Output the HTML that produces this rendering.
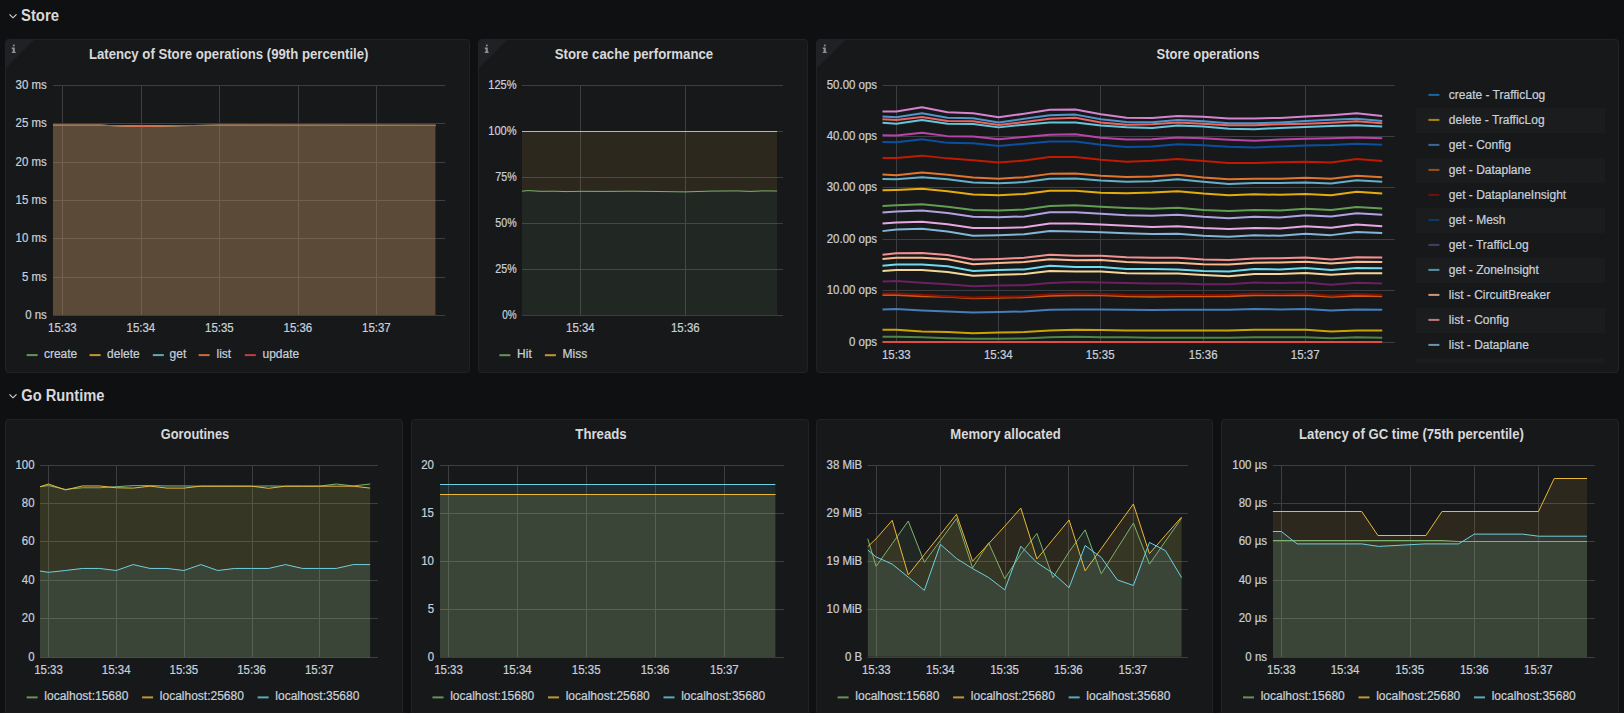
<!DOCTYPE html><html><head><meta charset="utf-8"><style>html,body{margin:0;padding:0;background:#0f1012;overflow:hidden;width:1624px;height:713px}svg{display:block}</style></head><body><svg width="1624" height="713" viewBox="0 0 1624 713" font-family='"Liberation Sans", sans-serif'>
<rect width="1624" height="713" fill="#0f1012"/>
<path d="M9.50,14.30 L13.00,17.80 L16.50,14.30" fill="none" stroke="#d8d9da" stroke-width="1.15"/>
<text x="21.00" y="21.00" font-size="16" fill="#d8d9da" text-anchor="start" font-weight="bold" textLength="38" lengthAdjust="spacingAndGlyphs">Store</text>
<path d="M9.50,394.30 L13.00,397.80 L16.50,394.30" fill="none" stroke="#d8d9da" stroke-width="1.15"/>
<text x="21.30" y="401.40" font-size="16" fill="#d8d9da" text-anchor="start" font-weight="bold" textLength="83.2" lengthAdjust="spacingAndGlyphs">Go Runtime</text>
<rect x="5.50" y="39.50" width="464.00" height="333.00" rx="3" fill="#17181a" stroke="#212225" stroke-width="1"/>
<path d="M6.00,42.00 Q6.00,40.00 8.00,40.00 L34.00,40.00 L6.00,68.00 Z" fill="#202124"/>
<g fill="#8e9094"><rect x="12.80" y="44.60" width="2" height="1.8" rx="0.8"/><path d="M11.80,47.60 h3 v4.2 h0.9 v1.3 h-3.9 v-1.3 h0.9 v-2.9 h-0.9 z"/></g>
<text x="88.90" y="58.90" font-size="14" fill="#d8d9da" text-anchor="start" font-weight="bold" textLength="279.6" lengthAdjust="spacingAndGlyphs">Latency of Store operations (99th percentile)</text>
<line x1="53.00" y1="85.50" x2="445.00" y2="85.50" stroke="#3d3e41" stroke-width="1"/>
<line x1="53.00" y1="123.50" x2="445.00" y2="123.50" stroke="#3d3e41" stroke-width="1"/>
<line x1="53.00" y1="162.50" x2="445.00" y2="162.50" stroke="#3d3e41" stroke-width="1"/>
<line x1="53.00" y1="200.50" x2="445.00" y2="200.50" stroke="#3d3e41" stroke-width="1"/>
<line x1="53.00" y1="238.50" x2="445.00" y2="238.50" stroke="#3d3e41" stroke-width="1"/>
<line x1="53.00" y1="277.50" x2="445.00" y2="277.50" stroke="#3d3e41" stroke-width="1"/>
<line x1="53.00" y1="315.50" x2="445.00" y2="315.50" stroke="#3d3e41" stroke-width="1"/>
<line x1="62.50" y1="85.50" x2="62.50" y2="315.50" stroke="#3d3e41" stroke-width="1"/>
<line x1="141.50" y1="85.50" x2="141.50" y2="315.50" stroke="#3d3e41" stroke-width="1"/>
<line x1="219.50" y1="85.50" x2="219.50" y2="315.50" stroke="#3d3e41" stroke-width="1"/>
<line x1="298.50" y1="85.50" x2="298.50" y2="315.50" stroke="#3d3e41" stroke-width="1"/>
<line x1="376.50" y1="85.50" x2="376.50" y2="315.50" stroke="#3d3e41" stroke-width="1"/>
<text x="46.80" y="89.00" font-size="12" fill="#c7d0d9" text-anchor="end" font-weight="normal" textLength="31.21" lengthAdjust="spacingAndGlyphs" stroke="#c7d0d9" stroke-width="0.22">30 ms</text>
<text x="46.80" y="127.33" font-size="12" fill="#c7d0d9" text-anchor="end" font-weight="normal" textLength="31.21" lengthAdjust="spacingAndGlyphs" stroke="#c7d0d9" stroke-width="0.22">25 ms</text>
<text x="46.80" y="165.67" font-size="12" fill="#c7d0d9" text-anchor="end" font-weight="normal" textLength="31.21" lengthAdjust="spacingAndGlyphs" stroke="#c7d0d9" stroke-width="0.22">20 ms</text>
<text x="46.80" y="204.00" font-size="12" fill="#c7d0d9" text-anchor="end" font-weight="normal" textLength="31.21" lengthAdjust="spacingAndGlyphs" stroke="#c7d0d9" stroke-width="0.22">15 ms</text>
<text x="46.80" y="242.33" font-size="12" fill="#c7d0d9" text-anchor="end" font-weight="normal" textLength="31.21" lengthAdjust="spacingAndGlyphs" stroke="#c7d0d9" stroke-width="0.22">10 ms</text>
<text x="46.80" y="280.66" font-size="12" fill="#c7d0d9" text-anchor="end" font-weight="normal" textLength="24.83" lengthAdjust="spacingAndGlyphs" stroke="#c7d0d9" stroke-width="0.22">5 ms</text>
<text x="46.80" y="319.00" font-size="12" fill="#c7d0d9" text-anchor="end" font-weight="normal" textLength="21.66" lengthAdjust="spacingAndGlyphs" stroke="#c7d0d9" stroke-width="0.22">0 ns</text>
<text x="62.40" y="332.10" font-size="12" fill="#c7d0d9" text-anchor="middle" font-weight="normal" textLength="28.68" lengthAdjust="spacingAndGlyphs" stroke="#c7d0d9" stroke-width="0.22">15:33</text>
<text x="140.90" y="332.10" font-size="12" fill="#c7d0d9" text-anchor="middle" font-weight="normal" textLength="28.68" lengthAdjust="spacingAndGlyphs" stroke="#c7d0d9" stroke-width="0.22">15:34</text>
<text x="219.40" y="332.10" font-size="12" fill="#c7d0d9" text-anchor="middle" font-weight="normal" textLength="28.68" lengthAdjust="spacingAndGlyphs" stroke="#c7d0d9" stroke-width="0.22">15:35</text>
<text x="297.90" y="332.10" font-size="12" fill="#c7d0d9" text-anchor="middle" font-weight="normal" textLength="28.68" lengthAdjust="spacingAndGlyphs" stroke="#c7d0d9" stroke-width="0.22">15:36</text>
<text x="376.40" y="332.10" font-size="12" fill="#c7d0d9" text-anchor="middle" font-weight="normal" textLength="28.68" lengthAdjust="spacingAndGlyphs" stroke="#c7d0d9" stroke-width="0.22">15:37</text>
<polygon points="53.00,315.00 53.00,125.30 100.00,125.30 141.00,126.20 180.00,125.60 220.00,125.30 435.40,125.40 435.40,315.00" fill="#7EB26D" fill-opacity="0.1"/>
<polygon points="53.00,315.00 53.00,125.30 100.00,125.30 141.00,126.20 180.00,125.60 220.00,125.30 435.40,125.40 435.40,315.00" fill="#EAB839" fill-opacity="0.1"/>
<polygon points="53.00,315.00 53.00,125.30 100.00,125.30 141.00,126.20 180.00,125.60 220.00,125.30 435.40,125.40 435.40,315.00" fill="#6ED0E0" fill-opacity="0.1"/>
<polygon points="53.00,315.00 53.00,125.30 100.00,125.30 141.00,126.20 180.00,125.60 220.00,125.30 435.40,125.40 435.40,315.00" fill="#EF843C" fill-opacity="0.1"/>
<polygon points="53.00,315.00 53.00,125.30 100.00,125.30 141.00,126.20 180.00,125.60 220.00,125.30 435.40,125.40 435.40,315.00" fill="#E24D42" fill-opacity="0.1"/>
<polyline points="53.00,125.30 100.00,125.30 141.00,126.20 180.00,125.60 220.00,125.30 435.40,125.40" fill="none" stroke="#7EB26D" stroke-width="1" stroke-linejoin="round"/><polyline points="53.00,125.30 100.00,125.30 141.00,126.20 180.00,125.60 220.00,125.30 435.40,125.40" fill="none" stroke="#EAB839" stroke-width="1" stroke-linejoin="round"/><polyline points="53.00,125.30 100.00,125.30 141.00,126.20 180.00,125.60 220.00,125.30 435.40,125.40" fill="none" stroke="#6ED0E0" stroke-width="1" stroke-linejoin="round"/><polyline points="53.00,125.30 100.00,125.30 141.00,126.20 180.00,125.60 220.00,125.30 435.40,125.40" fill="none" stroke="#EF843C" stroke-width="1" stroke-linejoin="round"/><polyline points="53.00,125.30 100.00,125.30 141.00,126.20 180.00,125.60 220.00,125.30 435.40,125.40" fill="none" stroke="#E24D42" stroke-width="1" stroke-linejoin="round"/>
<rect x="26.60" y="354.10" width="11" height="2" fill="#7EB26D" fill-opacity="0.8"/>
<text x="43.90" y="357.70" font-size="12" fill="#c7d0d9" text-anchor="start" font-weight="normal" stroke="#c7d0d9" stroke-width="0.22">create</text>
<rect x="89.60" y="354.10" width="11" height="2" fill="#EAB839" fill-opacity="0.8"/>
<text x="107.10" y="357.70" font-size="12" fill="#c7d0d9" text-anchor="start" font-weight="normal" stroke="#c7d0d9" stroke-width="0.22">delete</text>
<rect x="152.80" y="354.10" width="11" height="2" fill="#6ED0E0" fill-opacity="0.8"/>
<text x="169.60" y="357.70" font-size="12" fill="#c7d0d9" text-anchor="start" font-weight="normal" stroke="#c7d0d9" stroke-width="0.22">get</text>
<rect x="198.60" y="354.10" width="11" height="2" fill="#EF843C" fill-opacity="0.8"/>
<text x="216.50" y="357.70" font-size="12" fill="#c7d0d9" text-anchor="start" font-weight="normal" stroke="#c7d0d9" stroke-width="0.22">list</text>
<rect x="244.80" y="354.10" width="11" height="2" fill="#E24D42" fill-opacity="0.8"/>
<text x="262.50" y="357.70" font-size="12" fill="#c7d0d9" text-anchor="start" font-weight="normal" stroke="#c7d0d9" stroke-width="0.22">update</text>
<rect x="478.50" y="39.50" width="329.00" height="333.00" rx="3" fill="#17181a" stroke="#212225" stroke-width="1"/>
<path d="M479.00,42.00 Q479.00,40.00 481.00,40.00 L507.00,40.00 L479.00,68.00 Z" fill="#202124"/>
<g fill="#8e9094"><rect x="485.80" y="44.60" width="2" height="1.8" rx="0.8"/><path d="M484.80,47.60 h3 v4.2 h0.9 v1.3 h-3.9 v-1.3 h0.9 v-2.9 h-0.9 z"/></g>
<text x="554.70" y="58.90" font-size="14" fill="#d8d9da" text-anchor="start" font-weight="bold" textLength="158.5" lengthAdjust="spacingAndGlyphs">Store cache performance</text>
<line x1="522.00" y1="85.50" x2="783.00" y2="85.50" stroke="#3d3e41" stroke-width="1"/>
<line x1="522.00" y1="131.50" x2="783.00" y2="131.50" stroke="#3d3e41" stroke-width="1"/>
<line x1="522.00" y1="177.50" x2="783.00" y2="177.50" stroke="#3d3e41" stroke-width="1"/>
<line x1="522.00" y1="223.50" x2="783.00" y2="223.50" stroke="#3d3e41" stroke-width="1"/>
<line x1="522.00" y1="269.50" x2="783.00" y2="269.50" stroke="#3d3e41" stroke-width="1"/>
<line x1="522.00" y1="315.50" x2="783.00" y2="315.50" stroke="#3d3e41" stroke-width="1"/>
<line x1="580.50" y1="85.50" x2="580.50" y2="315.50" stroke="#3d3e41" stroke-width="1"/>
<line x1="685.50" y1="85.50" x2="685.50" y2="315.50" stroke="#3d3e41" stroke-width="1"/>
<text x="516.60" y="89.30" font-size="12" fill="#c7d0d9" text-anchor="end" font-weight="normal" textLength="28.3" lengthAdjust="spacingAndGlyphs" stroke="#c7d0d9" stroke-width="0.22">125%</text>
<text x="516.60" y="135.24" font-size="12" fill="#c7d0d9" text-anchor="end" font-weight="normal" textLength="28.3" lengthAdjust="spacingAndGlyphs" stroke="#c7d0d9" stroke-width="0.22">100%</text>
<text x="516.60" y="181.18" font-size="12" fill="#c7d0d9" text-anchor="end" font-weight="normal" textLength="21.3" lengthAdjust="spacingAndGlyphs" stroke="#c7d0d9" stroke-width="0.22">75%</text>
<text x="516.60" y="227.12" font-size="12" fill="#c7d0d9" text-anchor="end" font-weight="normal" textLength="21.3" lengthAdjust="spacingAndGlyphs" stroke="#c7d0d9" stroke-width="0.22">50%</text>
<text x="516.60" y="273.06" font-size="12" fill="#c7d0d9" text-anchor="end" font-weight="normal" textLength="21.3" lengthAdjust="spacingAndGlyphs" stroke="#c7d0d9" stroke-width="0.22">25%</text>
<text x="516.60" y="319.00" font-size="12" fill="#c7d0d9" text-anchor="end" font-weight="normal" textLength="14.4" lengthAdjust="spacingAndGlyphs" stroke="#c7d0d9" stroke-width="0.22">0%</text>
<text x="580.40" y="331.90" font-size="12" fill="#c7d0d9" text-anchor="middle" font-weight="normal" textLength="28.68" lengthAdjust="spacingAndGlyphs" stroke="#c7d0d9" stroke-width="0.22">15:34</text>
<text x="685.30" y="331.90" font-size="12" fill="#c7d0d9" text-anchor="middle" font-weight="normal" textLength="28.68" lengthAdjust="spacingAndGlyphs" stroke="#c7d0d9" stroke-width="0.22">15:36</text>
<polygon points="522.00,315.00 522.00,191.20 528.00,190.60 541.00,191.30 554.00,191.20 567.00,191.60 580.00,191.30 606.00,191.40 632.00,191.20 658.00,191.50 685.00,191.90 711.00,191.10 737.00,190.90 750.00,191.40 763.00,190.90 777.10,191.00 777.10,315.00" fill="#7EB26D" fill-opacity="0.1"/>
<polygon points="522,131.5 777.1,131.5 777.10,191.00 763.00,190.90 750.00,191.40 737.00,190.90 711.00,191.10 685.00,191.90 658.00,191.50 632.00,191.20 606.00,191.40 580.00,191.30 567.00,191.60 554.00,191.20 541.00,191.30 528.00,190.60 522.00,191.20" fill="#EAB839" fill-opacity="0.1"/>
<polyline points="522.00,191.20 528.00,190.60 541.00,191.30 554.00,191.20 567.00,191.60 580.00,191.30 606.00,191.40 632.00,191.20 658.00,191.50 685.00,191.90 711.00,191.10 737.00,190.90 750.00,191.40 763.00,190.90 777.10,191.00" fill="none" stroke="#7EB26D" stroke-width="1" stroke-linejoin="round"/><polyline points="522.00,131.50 777.10,131.50" fill="none" stroke="#EAB839" stroke-width="1" stroke-linejoin="round"/>
<rect x="499.40" y="354.20" width="11" height="2" fill="#7EB26D" fill-opacity="0.8"/>
<text x="517.10" y="357.80" font-size="12" fill="#c7d0d9" text-anchor="start" font-weight="normal" stroke="#c7d0d9" stroke-width="0.22">Hit</text>
<rect x="544.90" y="354.20" width="11" height="2" fill="#EAB839" fill-opacity="0.8"/>
<text x="562.60" y="357.80" font-size="12" fill="#c7d0d9" text-anchor="start" font-weight="normal" stroke="#c7d0d9" stroke-width="0.22">Miss</text>
<rect x="816.50" y="39.50" width="802.00" height="333.00" rx="3" fill="#17181a" stroke="#212225" stroke-width="1"/>
<path d="M817.00,42.00 Q817.00,40.00 819.00,40.00 L845.00,40.00 L817.00,68.00 Z" fill="#202124"/>
<g fill="#8e9094"><rect x="823.80" y="44.60" width="2" height="1.8" rx="0.8"/><path d="M822.80,47.60 h3 v4.2 h0.9 v1.3 h-3.9 v-1.3 h0.9 v-2.9 h-0.9 z"/></g>
<text x="1156.60" y="58.90" font-size="14" fill="#d8d9da" text-anchor="start" font-weight="bold" textLength="102.73" lengthAdjust="spacingAndGlyphs">Store operations</text>
<line x1="882.50" y1="85.50" x2="1394.60" y2="85.50" stroke="#3d3e41" stroke-width="1"/>
<line x1="882.50" y1="136.50" x2="1394.60" y2="136.50" stroke="#3d3e41" stroke-width="1"/>
<line x1="882.50" y1="187.50" x2="1394.60" y2="187.50" stroke="#3d3e41" stroke-width="1"/>
<line x1="882.50" y1="239.50" x2="1394.60" y2="239.50" stroke="#3d3e41" stroke-width="1"/>
<line x1="882.50" y1="290.50" x2="1394.60" y2="290.50" stroke="#3d3e41" stroke-width="1"/>
<line x1="882.50" y1="342.50" x2="1394.60" y2="342.50" stroke="#3d3e41" stroke-width="1"/>
<line x1="896.50" y1="85.50" x2="896.50" y2="342.50" stroke="#3d3e41" stroke-width="1"/>
<line x1="998.50" y1="85.50" x2="998.50" y2="342.50" stroke="#3d3e41" stroke-width="1"/>
<line x1="1100.50" y1="85.50" x2="1100.50" y2="342.50" stroke="#3d3e41" stroke-width="1"/>
<line x1="1203.50" y1="85.50" x2="1203.50" y2="342.50" stroke="#3d3e41" stroke-width="1"/>
<line x1="1305.50" y1="85.50" x2="1305.50" y2="342.50" stroke="#3d3e41" stroke-width="1"/>
<text x="877.10" y="89.20" font-size="12" fill="#c7d0d9" text-anchor="end" font-weight="normal" textLength="50.34" lengthAdjust="spacingAndGlyphs" stroke="#c7d0d9" stroke-width="0.22">50.00 ops</text>
<text x="877.10" y="140.10" font-size="12" fill="#c7d0d9" text-anchor="end" font-weight="normal" textLength="50.34" lengthAdjust="spacingAndGlyphs" stroke="#c7d0d9" stroke-width="0.22">40.00 ops</text>
<text x="877.10" y="191.20" font-size="12" fill="#c7d0d9" text-anchor="end" font-weight="normal" textLength="50.34" lengthAdjust="spacingAndGlyphs" stroke="#c7d0d9" stroke-width="0.22">30.00 ops</text>
<text x="877.10" y="243.10" font-size="12" fill="#c7d0d9" text-anchor="end" font-weight="normal" textLength="50.34" lengthAdjust="spacingAndGlyphs" stroke="#c7d0d9" stroke-width="0.22">20.00 ops</text>
<text x="877.10" y="294.10" font-size="12" fill="#c7d0d9" text-anchor="end" font-weight="normal" textLength="50.34" lengthAdjust="spacingAndGlyphs" stroke="#c7d0d9" stroke-width="0.22">10.00 ops</text>
<text x="877.10" y="345.60" font-size="12" fill="#c7d0d9" text-anchor="end" font-weight="normal" textLength="28.03" lengthAdjust="spacingAndGlyphs" stroke="#c7d0d9" stroke-width="0.22">0 ops</text>
<text x="896.30" y="359.00" font-size="12" fill="#c7d0d9" text-anchor="middle" font-weight="normal" textLength="28.68" lengthAdjust="spacingAndGlyphs" stroke="#c7d0d9" stroke-width="0.22">15:33</text>
<text x="998.30" y="359.00" font-size="12" fill="#c7d0d9" text-anchor="middle" font-weight="normal" textLength="28.68" lengthAdjust="spacingAndGlyphs" stroke="#c7d0d9" stroke-width="0.22">15:34</text>
<text x="1100.20" y="359.00" font-size="12" fill="#c7d0d9" text-anchor="middle" font-weight="normal" textLength="28.68" lengthAdjust="spacingAndGlyphs" stroke="#c7d0d9" stroke-width="0.22">15:35</text>
<text x="1203.20" y="359.00" font-size="12" fill="#c7d0d9" text-anchor="middle" font-weight="normal" textLength="28.68" lengthAdjust="spacingAndGlyphs" stroke="#c7d0d9" stroke-width="0.22">15:36</text>
<text x="1305.20" y="359.00" font-size="12" fill="#c7d0d9" text-anchor="middle" font-weight="normal" textLength="28.68" lengthAdjust="spacingAndGlyphs" stroke="#c7d0d9" stroke-width="0.22">15:37</text>
<polyline points="882.50,341.99 896.40,341.99 921.97,341.99 947.54,341.99 973.11,341.99 998.68,341.99 1024.25,341.99 1049.82,341.99 1075.39,341.99 1100.96,341.99 1126.53,341.99 1152.10,341.99 1177.67,341.99 1203.24,341.99 1228.81,341.99 1254.38,341.99 1279.95,341.99 1305.52,341.99 1331.09,341.99 1356.66,341.99 1382.23,341.99" fill="none" stroke="#E24D42" stroke-width="2" stroke-linejoin="round"/><polyline points="882.50,336.73 896.40,336.73 921.97,337.36 947.54,338.20 973.11,338.83 998.68,338.83 1024.25,338.41 1049.82,337.36 1075.39,336.73 1100.96,337.15 1126.53,337.36 1152.10,337.78 1177.67,337.78 1203.24,337.78 1228.81,337.78 1254.38,337.36 1279.95,337.36 1305.52,337.15 1331.09,338.20 1356.66,337.36 1382.23,337.78" fill="none" stroke="#508642" stroke-width="2" stroke-linejoin="round"/><polyline points="882.50,329.79 896.40,329.79 921.97,331.47 947.54,331.89 973.11,333.15 998.68,332.52 1024.25,332.10 1049.82,330.42 1075.39,329.79 1100.96,330.00 1126.53,330.42 1152.10,330.42 1177.67,330.42 1203.24,330.42 1228.81,330.42 1254.38,329.79 1279.95,329.79 1305.52,329.79 1331.09,331.47 1356.66,330.42 1382.23,330.42" fill="none" stroke="#CCA300" stroke-width="2" stroke-linejoin="round"/><polyline points="882.50,309.38 896.40,308.96 921.97,310.43 947.54,311.49 973.11,312.54 998.68,311.91 1024.25,311.49 1049.82,309.80 1075.39,309.38 1100.96,309.38 1126.53,309.80 1152.10,310.01 1177.67,309.80 1203.24,309.80 1228.81,309.80 1254.38,308.96 1279.95,309.38 1305.52,308.96 1331.09,310.43 1356.66,309.38 1382.23,309.80" fill="none" stroke="#447EBC" stroke-width="2" stroke-linejoin="round"/><polyline points="882.50,295.08 896.40,295.08 921.97,296.34 947.54,296.76 973.11,298.23 998.68,297.81 1024.25,297.18 1049.82,295.71 1075.39,295.29 1100.96,295.29 1126.53,296.34 1152.10,296.76 1177.67,296.34 1203.24,296.34 1228.81,296.34 1254.38,295.29 1279.95,295.29 1305.52,295.08 1331.09,296.76 1356.66,295.71 1382.23,296.34" fill="none" stroke="#C15C17" stroke-width="2" stroke-linejoin="round"/><polyline points="882.50,293.61 896.40,293.61 921.97,294.66 947.54,296.13 973.11,297.39 998.68,296.76 1024.25,296.34 1049.82,294.24 1075.39,293.61 1100.96,294.03 1126.53,295.08 1152.10,295.29 1177.67,295.08 1203.24,295.08 1228.81,294.66 1254.38,293.61 1279.95,294.03 1305.52,293.61 1331.09,295.71 1356.66,294.03 1382.23,295.08" fill="none" stroke="#890F02" stroke-width="2" stroke-linejoin="round"/><polyline points="882.50,281.41 896.40,280.98 921.97,282.67 947.54,284.14 973.11,286.24 998.68,285.61 1024.25,285.19 1049.82,283.09 1075.39,282.04 1100.96,282.46 1126.53,283.09 1152.10,283.51 1177.67,283.51 1203.24,284.14 1228.81,284.14 1254.38,282.46 1279.95,283.09 1305.52,282.46 1331.09,284.77 1356.66,282.67 1382.23,283.51" fill="none" stroke="#6D1F62" stroke-width="2" stroke-linejoin="round"/><polyline points="882.50,270.89 896.40,270.05 921.97,270.05 947.54,271.94 973.11,275.73 998.68,274.67 1024.25,274.04 1049.82,271.10 1075.39,271.52 1100.96,271.52 1126.53,273.20 1152.10,273.62 1177.67,273.62 1203.24,275.09 1228.81,276.36 1254.38,274.04 1279.95,274.04 1305.52,272.99 1331.09,274.67 1356.66,273.20 1382.23,273.20" fill="none" stroke="#F4D598" stroke-width="2" stroke-linejoin="round"/><polyline points="882.50,265.63 896.40,264.58 921.97,264.58 947.54,266.26 973.11,271.10 998.68,270.05 1024.25,269.42 1049.82,265.84 1075.39,266.89 1100.96,266.89 1126.53,268.99 1152.10,268.99 1177.67,269.42 1203.24,270.89 1228.81,271.52 1254.38,268.99 1279.95,269.42 1305.52,267.94 1331.09,270.05 1356.66,267.94 1382.23,268.36" fill="none" stroke="#70DBED" stroke-width="2" stroke-linejoin="round"/><polyline points="882.50,258.90 896.40,257.85 921.97,257.85 947.54,259.32 973.11,264.16 998.68,263.10 1024.25,262.05 1049.82,259.32 1075.39,260.37 1100.96,259.95 1126.53,262.05 1152.10,262.68 1177.67,262.68 1203.24,264.16 1228.81,264.58 1254.38,262.68 1279.95,262.47 1305.52,261.63 1331.09,263.53 1356.66,261.63 1382.23,262.05" fill="none" stroke="#F9BA8F" stroke-width="2" stroke-linejoin="round"/><polyline points="882.50,254.69 896.40,253.22 921.97,253.01 947.54,255.11 973.11,259.53 998.68,258.90 1024.25,257.85 1049.82,254.69 1075.39,255.74 1100.96,255.74 1126.53,257.21 1152.10,257.85 1177.67,257.85 1203.24,259.53 1228.81,259.95 1254.38,258.48 1279.95,258.27 1305.52,257.43 1331.09,259.53 1356.66,257.21 1382.23,257.43" fill="none" stroke="#F29191" stroke-width="2" stroke-linejoin="round"/><polyline points="882.50,231.13 896.40,229.45 921.97,228.82 947.54,231.55 973.11,235.76 998.68,235.13 1024.25,234.29 1049.82,230.92 1075.39,231.55 1100.96,232.18 1126.53,233.24 1152.10,234.08 1177.67,233.66 1203.24,235.76 1228.81,236.81 1254.38,235.34 1279.95,235.76 1305.52,233.66 1331.09,235.13 1356.66,231.97 1382.23,233.02" fill="none" stroke="#82B5D8" stroke-width="2" stroke-linejoin="round"/><polyline points="882.50,223.56 896.40,222.51 921.97,221.67 947.54,224.19 973.11,227.98 998.68,227.98 1024.25,227.35 1049.82,223.56 1075.39,223.56 1100.96,224.61 1126.53,225.87 1152.10,226.92 1177.67,226.29 1203.24,227.98 1228.81,229.03 1254.38,227.98 1279.95,228.40 1305.52,226.29 1331.09,227.77 1356.66,224.61 1382.23,226.29" fill="none" stroke="#E5A8E2" stroke-width="2" stroke-linejoin="round"/><polyline points="882.50,212.62 896.40,211.57 921.97,210.52 947.54,213.04 973.11,216.83 998.68,217.25 1024.25,216.41 1049.82,212.20 1075.39,212.20 1100.96,213.67 1126.53,215.15 1152.10,215.78 1177.67,214.72 1203.24,216.83 1228.81,218.30 1254.38,216.83 1279.95,217.46 1305.52,215.15 1331.09,216.41 1356.66,213.25 1382.23,214.72" fill="none" stroke="#AEA2E0" stroke-width="2" stroke-linejoin="round"/><polyline points="882.50,205.89 896.40,205.26 921.97,204.21 947.54,206.73 973.11,210.10 998.68,210.52 1024.25,209.47 1049.82,205.89 1075.39,205.26 1100.96,206.73 1126.53,207.99 1152.10,208.83 1177.67,207.78 1203.24,209.89 1228.81,210.94 1254.38,209.89 1279.95,210.52 1305.52,208.83 1331.09,209.89 1356.66,206.94 1382.23,208.41" fill="none" stroke="#629E51" stroke-width="2" stroke-linejoin="round"/><polyline points="882.50,190.27 896.40,189.91 921.97,188.81 947.54,191.19 973.11,194.47 998.68,195.20 1024.25,193.92 1049.82,190.82 1075.39,190.82 1100.96,192.64 1126.53,193.37 1152.10,192.62 1177.67,191.17 1203.24,193.54 1228.81,195.18 1254.38,194.27 1279.95,194.81 1305.52,193.90 1331.09,195.36 1356.66,191.71 1382.23,193.54" fill="none" stroke="#E5AC0E" stroke-width="2" stroke-linejoin="round"/><polyline points="882.50,178.97 896.40,179.33 921.97,177.15 947.54,179.33 973.11,182.43 998.68,183.35 1024.25,182.07 1049.82,178.79 1075.39,178.42 1100.96,180.61 1126.53,181.70 1152.10,181.14 1177.67,179.32 1203.24,181.69 1228.81,183.88 1254.38,182.96 1279.95,182.96 1305.52,182.42 1331.09,183.51 1356.66,180.23 1382.23,181.69" fill="none" stroke="#64B0C8" stroke-width="2" stroke-linejoin="round"/><polyline points="882.50,174.41 896.40,175.14 921.97,172.41 947.54,174.78 973.11,177.51 998.68,178.79 1024.25,177.15 1049.82,173.87 1075.39,173.50 1100.96,175.69 1126.53,176.96 1152.10,176.58 1177.67,174.76 1203.24,177.50 1228.81,179.32 1254.38,178.77 1279.95,178.77 1305.52,177.86 1331.09,178.77 1356.66,175.67 1382.23,177.13" fill="none" stroke="#E0752D" stroke-width="2" stroke-linejoin="round"/><polyline points="882.50,158.00 896.40,158.00 921.97,155.63 947.54,158.37 973.11,160.19 998.68,162.38 1024.25,160.56 1049.82,157.09 1075.39,157.09 1100.96,159.83 1126.53,161.65 1152.10,160.73 1177.67,158.90 1203.24,161.09 1228.81,162.91 1254.38,162.91 1279.95,162.37 1305.52,161.64 1331.09,162.55 1356.66,158.90 1382.23,161.09" fill="none" stroke="#BF1B00" stroke-width="2" stroke-linejoin="round"/><polyline points="882.50,141.96 896.40,142.32 921.97,139.23 947.54,142.87 973.11,143.24 998.68,145.97 1024.25,143.78 1049.82,141.60 1075.39,141.41 1100.96,144.69 1126.53,146.88 1152.10,146.51 1177.67,144.32 1203.24,145.23 1228.81,146.87 1254.38,147.42 1279.95,146.51 1305.52,145.60 1331.09,145.05 1356.66,143.77 1382.23,144.68" fill="none" stroke="#0A50A1" stroke-width="2" stroke-linejoin="round"/><polyline points="882.50,135.21 896.40,135.58 921.97,132.84 947.54,136.13 973.11,136.49 998.68,139.23 1024.25,137.04 1049.82,134.67 1075.39,134.30 1100.96,137.77 1126.53,139.59 1152.10,139.22 1177.67,137.39 1203.24,138.30 1228.81,139.76 1254.38,140.67 1279.95,139.58 1305.52,138.67 1331.09,138.30 1356.66,137.39 1382.23,138.30" fill="none" stroke="#BA43A9" stroke-width="2" stroke-linejoin="round"/><polyline points="882.50,122.82 896.40,123.73 921.97,120.08 947.54,123.73 973.11,124.09 998.68,127.37 1024.25,124.64 1049.82,122.45 1075.39,122.45 1100.96,125.55 1126.53,127.37 1152.10,127.91 1177.67,125.55 1203.24,126.46 1228.81,128.64 1254.38,129.19 1279.95,127.91 1305.52,127.00 1331.09,126.09 1356.66,125.18 1382.23,126.46" fill="none" stroke="#65C5DB" stroke-width="2" stroke-linejoin="round"/><polyline points="882.50,119.17 896.40,120.08 921.97,116.98 947.54,120.99 973.11,121.36 998.68,125.00 1024.25,121.91 1049.82,118.81 1075.39,117.71 1100.96,122.45 1126.53,124.64 1152.10,124.27 1177.67,122.45 1203.24,123.72 1228.81,125.18 1254.38,125.18 1279.95,124.27 1305.52,123.72 1331.09,122.81 1356.66,121.35 1382.23,123.36" fill="none" stroke="#EA6460" stroke-width="2" stroke-linejoin="round"/><polyline points="882.50,116.44 896.40,117.35 921.97,113.15 947.54,117.71 973.11,118.26 998.68,122.45 1024.25,118.81 1049.82,115.16 1075.39,114.61 1100.96,119.17 1126.53,121.91 1152.10,122.26 1177.67,120.08 1203.24,121.35 1228.81,123.18 1254.38,123.36 1279.95,122.45 1305.52,120.99 1331.09,119.71 1356.66,118.80 1382.23,120.99" fill="none" stroke="#5195CE" stroke-width="2" stroke-linejoin="round"/><polyline points="882.50,111.51 896.40,111.51 921.97,107.32 947.54,112.24 973.11,113.15 998.68,117.35 1024.25,113.70 1049.82,109.69 1075.39,109.51 1100.96,114.25 1126.53,117.71 1152.10,117.89 1177.67,115.88 1203.24,116.80 1228.81,118.44 1254.38,118.44 1279.95,117.89 1305.52,116.43 1331.09,115.15 1356.66,113.33 1382.23,115.88" fill="none" stroke="#D683CE" stroke-width="2" stroke-linejoin="round"/>
<rect x="1415.7" y="108.00" width="189.4" height="25.00" fill="#1b1c1e"/>
<rect x="1415.7" y="158.00" width="189.4" height="25.00" fill="#1b1c1e"/>
<rect x="1415.7" y="208.00" width="189.4" height="25.00" fill="#1b1c1e"/>
<rect x="1415.7" y="258.00" width="189.4" height="25.00" fill="#1b1c1e"/>
<rect x="1415.7" y="308.00" width="189.4" height="25.00" fill="#1b1c1e"/>
<rect x="1415.7" y="358.00" width="189.4" height="5.60" fill="#1b1c1e"/>
<rect x="1428.4" y="93.90" width="11" height="2" fill="#1F78C1" fill-opacity="0.8"/>
<text x="1448.80" y="99.20" font-size="12" fill="#c7d0d9" text-anchor="start" font-weight="normal" stroke="#c7d0d9" stroke-width="0.22">create - TrafficLog</text>
<rect x="1428.4" y="118.90" width="11" height="2" fill="#CCA300" fill-opacity="0.8"/>
<text x="1448.80" y="124.20" font-size="12" fill="#c7d0d9" text-anchor="start" font-weight="normal" stroke="#c7d0d9" stroke-width="0.22">delete - TrafficLog</text>
<rect x="1428.4" y="143.90" width="11" height="2" fill="#447EBC" fill-opacity="0.8"/>
<text x="1448.80" y="149.20" font-size="12" fill="#c7d0d9" text-anchor="start" font-weight="normal" stroke="#c7d0d9" stroke-width="0.22">get - Config</text>
<rect x="1428.4" y="168.90" width="11" height="2" fill="#C15C17" fill-opacity="0.8"/>
<text x="1448.80" y="174.20" font-size="12" fill="#c7d0d9" text-anchor="start" font-weight="normal" stroke="#c7d0d9" stroke-width="0.22">get - Dataplane</text>
<rect x="1428.4" y="193.90" width="11" height="2" fill="#890F02" fill-opacity="0.8"/>
<text x="1448.80" y="199.20" font-size="12" fill="#c7d0d9" text-anchor="start" font-weight="normal" stroke="#c7d0d9" stroke-width="0.22">get - DataplaneInsight</text>
<rect x="1428.4" y="218.90" width="11" height="2" fill="#0A437C" fill-opacity="0.8"/>
<text x="1448.80" y="224.20" font-size="12" fill="#c7d0d9" text-anchor="start" font-weight="normal" stroke="#c7d0d9" stroke-width="0.22">get - Mesh</text>
<rect x="1428.4" y="243.90" width="11" height="2" fill="#584477" fill-opacity="0.8"/>
<text x="1448.80" y="249.20" font-size="12" fill="#c7d0d9" text-anchor="start" font-weight="normal" stroke="#c7d0d9" stroke-width="0.22">get - TrafficLog</text>
<rect x="1428.4" y="268.90" width="11" height="2" fill="#64B0C8" fill-opacity="0.8"/>
<text x="1448.80" y="274.20" font-size="12" fill="#c7d0d9" text-anchor="start" font-weight="normal" stroke="#c7d0d9" stroke-width="0.22">get - ZoneInsight</text>
<rect x="1428.4" y="293.90" width="11" height="2" fill="#F9BA8F" fill-opacity="0.8"/>
<text x="1448.80" y="299.20" font-size="12" fill="#c7d0d9" text-anchor="start" font-weight="normal" stroke="#c7d0d9" stroke-width="0.22">list - CircuitBreaker</text>
<rect x="1428.4" y="318.90" width="11" height="2" fill="#F29191" fill-opacity="0.8"/>
<text x="1448.80" y="324.20" font-size="12" fill="#c7d0d9" text-anchor="start" font-weight="normal" stroke="#c7d0d9" stroke-width="0.22">list - Config</text>
<rect x="1428.4" y="343.90" width="11" height="2" fill="#82B5D8" fill-opacity="0.8"/>
<text x="1448.80" y="349.20" font-size="12" fill="#c7d0d9" text-anchor="start" font-weight="normal" stroke="#c7d0d9" stroke-width="0.22">list - Dataplane</text>
<rect x="5.50" y="419.50" width="397.00" height="320.00" rx="3" fill="#17181a" stroke="#212225" stroke-width="1"/>
<text x="195.00" y="439.30" font-size="14" fill="#d8d9da" text-anchor="middle" font-weight="bold" textLength="68.48" lengthAdjust="spacingAndGlyphs">Goroutines</text>
<line x1="40.00" y1="465.50" x2="378.00" y2="465.50" stroke="#3d3e41" stroke-width="1"/>
<line x1="40.00" y1="503.50" x2="378.00" y2="503.50" stroke="#3d3e41" stroke-width="1"/>
<line x1="40.00" y1="541.50" x2="378.00" y2="541.50" stroke="#3d3e41" stroke-width="1"/>
<line x1="40.00" y1="580.50" x2="378.00" y2="580.50" stroke="#3d3e41" stroke-width="1"/>
<line x1="40.00" y1="618.50" x2="378.00" y2="618.50" stroke="#3d3e41" stroke-width="1"/>
<line x1="40.00" y1="657.50" x2="378.00" y2="657.50" stroke="#3d3e41" stroke-width="1"/>
<line x1="48.50" y1="465.50" x2="48.50" y2="657.50" stroke="#3d3e41" stroke-width="1"/>
<line x1="116.50" y1="465.50" x2="116.50" y2="657.50" stroke="#3d3e41" stroke-width="1"/>
<line x1="184.50" y1="465.50" x2="184.50" y2="657.50" stroke="#3d3e41" stroke-width="1"/>
<line x1="252.50" y1="465.50" x2="252.50" y2="657.50" stroke="#3d3e41" stroke-width="1"/>
<line x1="319.50" y1="465.50" x2="319.50" y2="657.50" stroke="#3d3e41" stroke-width="1"/>
<text x="34.60" y="469.10" font-size="12" fill="#c7d0d9" text-anchor="end" font-weight="normal" textLength="19.12" lengthAdjust="spacingAndGlyphs" stroke="#c7d0d9" stroke-width="0.22">100</text>
<text x="34.60" y="507.00" font-size="12" fill="#c7d0d9" text-anchor="end" font-weight="normal" textLength="12.75" lengthAdjust="spacingAndGlyphs" stroke="#c7d0d9" stroke-width="0.22">80</text>
<text x="34.60" y="545.30" font-size="12" fill="#c7d0d9" text-anchor="end" font-weight="normal" textLength="12.75" lengthAdjust="spacingAndGlyphs" stroke="#c7d0d9" stroke-width="0.22">60</text>
<text x="34.60" y="583.60" font-size="12" fill="#c7d0d9" text-anchor="end" font-weight="normal" textLength="12.75" lengthAdjust="spacingAndGlyphs" stroke="#c7d0d9" stroke-width="0.22">40</text>
<text x="34.60" y="621.90" font-size="12" fill="#c7d0d9" text-anchor="end" font-weight="normal" textLength="12.75" lengthAdjust="spacingAndGlyphs" stroke="#c7d0d9" stroke-width="0.22">20</text>
<text x="34.60" y="661.00" font-size="12" fill="#c7d0d9" text-anchor="end" font-weight="normal" textLength="6.37" lengthAdjust="spacingAndGlyphs" stroke="#c7d0d9" stroke-width="0.22">0</text>
<text x="48.50" y="673.60" font-size="12" fill="#c7d0d9" text-anchor="middle" font-weight="normal" textLength="28.68" lengthAdjust="spacingAndGlyphs" stroke="#c7d0d9" stroke-width="0.22">15:33</text>
<text x="116.20" y="673.60" font-size="12" fill="#c7d0d9" text-anchor="middle" font-weight="normal" textLength="28.68" lengthAdjust="spacingAndGlyphs" stroke="#c7d0d9" stroke-width="0.22">15:34</text>
<text x="183.90" y="673.60" font-size="12" fill="#c7d0d9" text-anchor="middle" font-weight="normal" textLength="28.68" lengthAdjust="spacingAndGlyphs" stroke="#c7d0d9" stroke-width="0.22">15:35</text>
<text x="251.60" y="673.60" font-size="12" fill="#c7d0d9" text-anchor="middle" font-weight="normal" textLength="28.68" lengthAdjust="spacingAndGlyphs" stroke="#c7d0d9" stroke-width="0.22">15:36</text>
<text x="319.30" y="673.60" font-size="12" fill="#c7d0d9" text-anchor="middle" font-weight="normal" textLength="28.68" lengthAdjust="spacingAndGlyphs" stroke="#c7d0d9" stroke-width="0.22">15:37</text>
<polygon points="40.00,657.50 40.00,486.70 48.50,485.62 65.43,489.40 82.36,487.78 99.29,487.78 116.22,486.70 133.15,485.62 150.08,485.62 167.01,485.95 183.94,485.95 200.87,486.16 217.80,486.16 234.73,486.16 251.66,486.16 268.59,485.95 285.52,486.16 302.45,486.16 319.38,486.16 336.31,484.01 353.24,485.95 370.17,484.01 370.17,657.50" fill="#7EB26D" fill-opacity="0.1"/>
<polygon points="40.00,657.50 40.00,486.70 48.50,484.01 65.43,489.94 82.36,485.95 99.29,485.95 116.22,487.78 133.15,488.10 150.08,486.16 167.01,488.10 183.94,488.10 200.87,486.16 217.80,486.16 234.73,486.16 251.66,486.16 268.59,488.32 285.52,486.16 302.45,486.16 319.38,486.16 336.31,486.16 353.24,486.16 370.17,488.10 370.17,657.50" fill="#EAB839" fill-opacity="0.1"/>
<polygon points="40.00,657.50 40.00,571.03 48.50,572.32 65.43,570.51 82.36,568.45 99.29,568.45 116.22,570.51 133.15,564.57 150.08,568.45 167.01,568.45 183.94,570.51 200.87,564.57 217.80,570.51 234.73,568.45 251.66,568.45 268.59,568.45 285.52,564.57 302.45,568.45 319.38,568.45 336.31,568.45 353.24,564.57 370.17,564.57 370.17,657.50" fill="#6ED0E0" fill-opacity="0.1"/>
<polyline points="40.00,486.70 48.50,485.62 65.43,489.40 82.36,487.78 99.29,487.78 116.22,486.70 133.15,485.62 150.08,485.62 167.01,485.95 183.94,485.95 200.87,486.16 217.80,486.16 234.73,486.16 251.66,486.16 268.59,485.95 285.52,486.16 302.45,486.16 319.38,486.16 336.31,484.01 353.24,485.95 370.17,484.01" fill="none" stroke="#7EB26D" stroke-width="1" stroke-linejoin="round"/><polyline points="40.00,486.70 48.50,484.01 65.43,489.94 82.36,485.95 99.29,485.95 116.22,487.78 133.15,488.10 150.08,486.16 167.01,488.10 183.94,488.10 200.87,486.16 217.80,486.16 234.73,486.16 251.66,486.16 268.59,488.32 285.52,486.16 302.45,486.16 319.38,486.16 336.31,486.16 353.24,486.16 370.17,488.10" fill="none" stroke="#EAB839" stroke-width="1" stroke-linejoin="round"/><polyline points="40.00,571.03 48.50,572.32 65.43,570.51 82.36,568.45 99.29,568.45 116.22,570.51 133.15,564.57 150.08,568.45 167.01,568.45 183.94,570.51 200.87,564.57 217.80,570.51 234.73,568.45 251.66,568.45 268.59,568.45 285.52,564.57 302.45,568.45 319.38,568.45 336.31,568.45 353.24,564.57 370.17,564.57" fill="none" stroke="#6ED0E0" stroke-width="1" stroke-linejoin="round"/>
<rect x="26.60" y="696.40" width="11" height="2" fill="#7EB26D" fill-opacity="0.8"/>
<text x="44.30" y="700.00" font-size="12" fill="#c7d0d9" text-anchor="start" font-weight="normal" stroke="#c7d0d9" stroke-width="0.22">localhost:15680</text>
<rect x="142.10" y="696.40" width="11" height="2" fill="#EAB839" fill-opacity="0.8"/>
<text x="159.80" y="700.00" font-size="12" fill="#c7d0d9" text-anchor="start" font-weight="normal" stroke="#c7d0d9" stroke-width="0.22">localhost:25680</text>
<rect x="257.60" y="696.40" width="11" height="2" fill="#6ED0E0" fill-opacity="0.8"/>
<text x="275.30" y="700.00" font-size="12" fill="#c7d0d9" text-anchor="start" font-weight="normal" stroke="#c7d0d9" stroke-width="0.22">localhost:35680</text>
<rect x="411.50" y="419.50" width="397.00" height="320.00" rx="3" fill="#17181a" stroke="#212225" stroke-width="1"/>
<text x="601.00" y="439.30" font-size="14" fill="#d8d9da" text-anchor="middle" font-weight="bold" textLength="51.36" lengthAdjust="spacingAndGlyphs">Threads</text>
<line x1="440.00" y1="465.50" x2="784.00" y2="465.50" stroke="#3d3e41" stroke-width="1"/>
<line x1="440.00" y1="513.50" x2="784.00" y2="513.50" stroke="#3d3e41" stroke-width="1"/>
<line x1="440.00" y1="561.50" x2="784.00" y2="561.50" stroke="#3d3e41" stroke-width="1"/>
<line x1="440.00" y1="609.50" x2="784.00" y2="609.50" stroke="#3d3e41" stroke-width="1"/>
<line x1="440.00" y1="657.50" x2="784.00" y2="657.50" stroke="#3d3e41" stroke-width="1"/>
<line x1="448.50" y1="465.50" x2="448.50" y2="657.50" stroke="#3d3e41" stroke-width="1"/>
<line x1="517.50" y1="465.50" x2="517.50" y2="657.50" stroke="#3d3e41" stroke-width="1"/>
<line x1="586.50" y1="465.50" x2="586.50" y2="657.50" stroke="#3d3e41" stroke-width="1"/>
<line x1="655.50" y1="465.50" x2="655.50" y2="657.50" stroke="#3d3e41" stroke-width="1"/>
<line x1="724.50" y1="465.50" x2="724.50" y2="657.50" stroke="#3d3e41" stroke-width="1"/>
<text x="434.00" y="469.30" font-size="12" fill="#c7d0d9" text-anchor="end" font-weight="normal" textLength="12.75" lengthAdjust="spacingAndGlyphs" stroke="#c7d0d9" stroke-width="0.22">20</text>
<text x="434.00" y="517.23" font-size="12" fill="#c7d0d9" text-anchor="end" font-weight="normal" textLength="12.75" lengthAdjust="spacingAndGlyphs" stroke="#c7d0d9" stroke-width="0.22">15</text>
<text x="434.00" y="565.16" font-size="12" fill="#c7d0d9" text-anchor="end" font-weight="normal" textLength="12.75" lengthAdjust="spacingAndGlyphs" stroke="#c7d0d9" stroke-width="0.22">10</text>
<text x="434.00" y="613.09" font-size="12" fill="#c7d0d9" text-anchor="end" font-weight="normal" textLength="6.37" lengthAdjust="spacingAndGlyphs" stroke="#c7d0d9" stroke-width="0.22">5</text>
<text x="434.00" y="661.02" font-size="12" fill="#c7d0d9" text-anchor="end" font-weight="normal" textLength="6.37" lengthAdjust="spacingAndGlyphs" stroke="#c7d0d9" stroke-width="0.22">0</text>
<text x="448.50" y="673.60" font-size="12" fill="#c7d0d9" text-anchor="middle" font-weight="normal" textLength="28.68" lengthAdjust="spacingAndGlyphs" stroke="#c7d0d9" stroke-width="0.22">15:33</text>
<text x="517.30" y="673.60" font-size="12" fill="#c7d0d9" text-anchor="middle" font-weight="normal" textLength="28.68" lengthAdjust="spacingAndGlyphs" stroke="#c7d0d9" stroke-width="0.22">15:34</text>
<text x="586.20" y="673.60" font-size="12" fill="#c7d0d9" text-anchor="middle" font-weight="normal" textLength="28.68" lengthAdjust="spacingAndGlyphs" stroke="#c7d0d9" stroke-width="0.22">15:35</text>
<text x="655.10" y="673.60" font-size="12" fill="#c7d0d9" text-anchor="middle" font-weight="normal" textLength="28.68" lengthAdjust="spacingAndGlyphs" stroke="#c7d0d9" stroke-width="0.22">15:36</text>
<text x="724.40" y="673.60" font-size="12" fill="#c7d0d9" text-anchor="middle" font-weight="normal" textLength="28.68" lengthAdjust="spacingAndGlyphs" stroke="#c7d0d9" stroke-width="0.22">15:37</text>
<polygon points="440.00,657.00 440.00,494.50 775.40,494.50 775.40,657.00" fill="#7EB26D" fill-opacity="0.1"/>
<polygon points="440.00,657.00 440.00,494.50 775.40,494.50 775.40,657.00" fill="#EAB839" fill-opacity="0.1"/>
<polygon points="440.00,657.00 440.00,484.50 775.40,484.50 775.40,657.00" fill="#6ED0E0" fill-opacity="0.1"/>
<polyline points="440.00,494.50 775.40,494.50" fill="none" stroke="#7EB26D" stroke-width="1" stroke-linejoin="round"/><polyline points="440.00,494.50 775.40,494.50" fill="none" stroke="#EAB839" stroke-width="1" stroke-linejoin="round"/><polyline points="440.00,484.50 775.40,484.50" fill="none" stroke="#6ED0E0" stroke-width="1" stroke-linejoin="round"/>
<rect x="432.50" y="696.40" width="11" height="2" fill="#7EB26D" fill-opacity="0.8"/>
<text x="450.20" y="700.00" font-size="12" fill="#c7d0d9" text-anchor="start" font-weight="normal" stroke="#c7d0d9" stroke-width="0.22">localhost:15680</text>
<rect x="548.00" y="696.40" width="11" height="2" fill="#EAB839" fill-opacity="0.8"/>
<text x="565.70" y="700.00" font-size="12" fill="#c7d0d9" text-anchor="start" font-weight="normal" stroke="#c7d0d9" stroke-width="0.22">localhost:25680</text>
<rect x="663.50" y="696.40" width="11" height="2" fill="#6ED0E0" fill-opacity="0.8"/>
<text x="681.20" y="700.00" font-size="12" fill="#c7d0d9" text-anchor="start" font-weight="normal" stroke="#c7d0d9" stroke-width="0.22">localhost:35680</text>
<rect x="816.50" y="419.50" width="396.00" height="320.00" rx="3" fill="#17181a" stroke="#212225" stroke-width="1"/>
<text x="1005.50" y="439.30" font-size="14" fill="#d8d9da" text-anchor="middle" font-weight="bold" textLength="110.49" lengthAdjust="spacingAndGlyphs">Memory allocated</text>
<line x1="867.30" y1="465.50" x2="1188.00" y2="465.50" stroke="#3d3e41" stroke-width="1"/>
<line x1="867.30" y1="513.50" x2="1188.00" y2="513.50" stroke="#3d3e41" stroke-width="1"/>
<line x1="867.30" y1="561.50" x2="1188.00" y2="561.50" stroke="#3d3e41" stroke-width="1"/>
<line x1="867.30" y1="609.50" x2="1188.00" y2="609.50" stroke="#3d3e41" stroke-width="1"/>
<line x1="867.30" y1="657.50" x2="1188.00" y2="657.50" stroke="#3d3e41" stroke-width="1"/>
<line x1="876.50" y1="465.50" x2="876.50" y2="657.50" stroke="#3d3e41" stroke-width="1"/>
<line x1="940.50" y1="465.50" x2="940.50" y2="657.50" stroke="#3d3e41" stroke-width="1"/>
<line x1="1005.50" y1="465.50" x2="1005.50" y2="657.50" stroke="#3d3e41" stroke-width="1"/>
<line x1="1068.50" y1="465.50" x2="1068.50" y2="657.50" stroke="#3d3e41" stroke-width="1"/>
<line x1="1133.50" y1="465.50" x2="1133.50" y2="657.50" stroke="#3d3e41" stroke-width="1"/>
<text x="862.20" y="469.20" font-size="12" fill="#c7d0d9" text-anchor="end" font-weight="normal" textLength="35.67" lengthAdjust="spacingAndGlyphs" stroke="#c7d0d9" stroke-width="0.22">38 MiB</text>
<text x="862.20" y="517.10" font-size="12" fill="#c7d0d9" text-anchor="end" font-weight="normal" textLength="35.67" lengthAdjust="spacingAndGlyphs" stroke="#c7d0d9" stroke-width="0.22">29 MiB</text>
<text x="862.20" y="565.00" font-size="12" fill="#c7d0d9" text-anchor="end" font-weight="normal" textLength="35.67" lengthAdjust="spacingAndGlyphs" stroke="#c7d0d9" stroke-width="0.22">19 MiB</text>
<text x="862.20" y="612.90" font-size="12" fill="#c7d0d9" text-anchor="end" font-weight="normal" textLength="35.67" lengthAdjust="spacingAndGlyphs" stroke="#c7d0d9" stroke-width="0.22">10 MiB</text>
<text x="862.20" y="660.80" font-size="12" fill="#c7d0d9" text-anchor="end" font-weight="normal" textLength="17.2" lengthAdjust="spacingAndGlyphs" stroke="#c7d0d9" stroke-width="0.22">0 B</text>
<text x="876.30" y="673.60" font-size="12" fill="#c7d0d9" text-anchor="middle" font-weight="normal" textLength="28.68" lengthAdjust="spacingAndGlyphs" stroke="#c7d0d9" stroke-width="0.22">15:33</text>
<text x="940.40" y="673.60" font-size="12" fill="#c7d0d9" text-anchor="middle" font-weight="normal" textLength="28.68" lengthAdjust="spacingAndGlyphs" stroke="#c7d0d9" stroke-width="0.22">15:34</text>
<text x="1004.60" y="673.60" font-size="12" fill="#c7d0d9" text-anchor="middle" font-weight="normal" textLength="28.68" lengthAdjust="spacingAndGlyphs" stroke="#c7d0d9" stroke-width="0.22">15:35</text>
<text x="1068.30" y="673.60" font-size="12" fill="#c7d0d9" text-anchor="middle" font-weight="normal" textLength="28.68" lengthAdjust="spacingAndGlyphs" stroke="#c7d0d9" stroke-width="0.22">15:36</text>
<text x="1132.90" y="673.60" font-size="12" fill="#c7d0d9" text-anchor="middle" font-weight="normal" textLength="28.68" lengthAdjust="spacingAndGlyphs" stroke="#c7d0d9" stroke-width="0.22">15:37</text>
<polygon points="867.80,656.80 867.80,538.76 876.10,566.34 892.18,543.69 908.26,521.04 924.34,562.31 940.42,540.55 956.50,518.57 972.58,567.91 988.66,542.79 1004.74,578.68 1020.82,554.06 1036.90,533.41 1052.98,577.62 1069.06,551.81 1085.14,529.82 1101.22,573.81 1117.30,548.45 1133.38,523.09 1149.46,564.16 1165.54,541.04 1181.62,518.15 1181.62,656.80" fill="#7EB26D" fill-opacity="0.1"/>
<polygon points="867.80,656.80 867.80,546.61 876.10,538.76 892.18,520.37 908.26,574.86 924.34,554.68 940.42,534.50 956.50,514.31 972.58,561.18 988.66,543.69 1004.74,526.20 1020.82,508.05 1036.90,558.99 1052.98,539.47 1069.06,519.95 1085.14,570.89 1101.22,548.67 1117.30,526.23 1133.38,504.01 1149.46,553.61 1165.54,535.21 1181.62,517.03 1181.62,656.80" fill="#EAB839" fill-opacity="0.1"/>
<polygon points="867.80,656.80 867.80,549.97 876.10,556.92 892.18,564.10 908.26,577.11 924.34,590.34 940.42,544.36 956.50,558.49 972.58,568.58 988.66,577.56 1004.74,589.89 1020.82,546.20 1036.90,562.59 1052.98,573.13 1069.06,587.72 1085.14,545.53 1101.22,557.42 1117.30,579.87 1133.38,585.48 1149.46,542.39 1165.54,550.69 1181.62,577.62 1181.62,656.80" fill="#6ED0E0" fill-opacity="0.1"/>
<polyline points="867.80,538.76 876.10,566.34 892.18,543.69 908.26,521.04 924.34,562.31 940.42,540.55 956.50,518.57 972.58,567.91 988.66,542.79 1004.74,578.68 1020.82,554.06 1036.90,533.41 1052.98,577.62 1069.06,551.81 1085.14,529.82 1101.22,573.81 1117.30,548.45 1133.38,523.09 1149.46,564.16 1165.54,541.04 1181.62,518.15" fill="none" stroke="#7EB26D" stroke-width="1" stroke-linejoin="round"/><polyline points="867.80,546.61 876.10,538.76 892.18,520.37 908.26,574.86 924.34,554.68 940.42,534.50 956.50,514.31 972.58,561.18 988.66,543.69 1004.74,526.20 1020.82,508.05 1036.90,558.99 1052.98,539.47 1069.06,519.95 1085.14,570.89 1101.22,548.67 1117.30,526.23 1133.38,504.01 1149.46,553.61 1165.54,535.21 1181.62,517.03" fill="none" stroke="#EAB839" stroke-width="1" stroke-linejoin="round"/><polyline points="867.80,549.97 876.10,556.92 892.18,564.10 908.26,577.11 924.34,590.34 940.42,544.36 956.50,558.49 972.58,568.58 988.66,577.56 1004.74,589.89 1020.82,546.20 1036.90,562.59 1052.98,573.13 1069.06,587.72 1085.14,545.53 1101.22,557.42 1117.30,579.87 1133.38,585.48 1149.46,542.39 1165.54,550.69 1181.62,577.62" fill="none" stroke="#6ED0E0" stroke-width="1" stroke-linejoin="round"/>
<rect x="837.60" y="696.40" width="11" height="2" fill="#7EB26D" fill-opacity="0.8"/>
<text x="855.30" y="700.00" font-size="12" fill="#c7d0d9" text-anchor="start" font-weight="normal" stroke="#c7d0d9" stroke-width="0.22">localhost:15680</text>
<rect x="953.10" y="696.40" width="11" height="2" fill="#EAB839" fill-opacity="0.8"/>
<text x="970.80" y="700.00" font-size="12" fill="#c7d0d9" text-anchor="start" font-weight="normal" stroke="#c7d0d9" stroke-width="0.22">localhost:25680</text>
<rect x="1068.60" y="696.40" width="11" height="2" fill="#6ED0E0" fill-opacity="0.8"/>
<text x="1086.30" y="700.00" font-size="12" fill="#c7d0d9" text-anchor="start" font-weight="normal" stroke="#c7d0d9" stroke-width="0.22">localhost:35680</text>
<rect x="1221.50" y="419.50" width="397.00" height="320.00" rx="3" fill="#17181a" stroke="#212225" stroke-width="1"/>
<text x="1411.50" y="439.30" font-size="14" fill="#d8d9da" text-anchor="middle" font-weight="bold" textLength="224.88" lengthAdjust="spacingAndGlyphs">Latency of GC time (75th percentile)</text>
<line x1="1272.90" y1="465.50" x2="1594.60" y2="465.50" stroke="#3d3e41" stroke-width="1"/>
<line x1="1272.90" y1="503.50" x2="1594.60" y2="503.50" stroke="#3d3e41" stroke-width="1"/>
<line x1="1272.90" y1="541.50" x2="1594.60" y2="541.50" stroke="#3d3e41" stroke-width="1"/>
<line x1="1272.90" y1="580.50" x2="1594.60" y2="580.50" stroke="#3d3e41" stroke-width="1"/>
<line x1="1272.90" y1="618.50" x2="1594.60" y2="618.50" stroke="#3d3e41" stroke-width="1"/>
<line x1="1272.90" y1="657.50" x2="1594.60" y2="657.50" stroke="#3d3e41" stroke-width="1"/>
<line x1="1281.50" y1="465.50" x2="1281.50" y2="657.50" stroke="#3d3e41" stroke-width="1"/>
<line x1="1345.50" y1="465.50" x2="1345.50" y2="657.50" stroke="#3d3e41" stroke-width="1"/>
<line x1="1410.50" y1="465.50" x2="1410.50" y2="657.50" stroke="#3d3e41" stroke-width="1"/>
<line x1="1474.50" y1="465.50" x2="1474.50" y2="657.50" stroke="#3d3e41" stroke-width="1"/>
<line x1="1538.50" y1="465.50" x2="1538.50" y2="657.50" stroke="#3d3e41" stroke-width="1"/>
<text x="1267.00" y="469.00" font-size="12" fill="#c7d0d9" text-anchor="end" font-weight="normal" textLength="34.64" lengthAdjust="spacingAndGlyphs" stroke="#c7d0d9" stroke-width="0.22">100 µs</text>
<text x="1267.00" y="507.00" font-size="12" fill="#c7d0d9" text-anchor="end" font-weight="normal" textLength="28.26" lengthAdjust="spacingAndGlyphs" stroke="#c7d0d9" stroke-width="0.22">80 µs</text>
<text x="1267.00" y="545.30" font-size="12" fill="#c7d0d9" text-anchor="end" font-weight="normal" textLength="28.26" lengthAdjust="spacingAndGlyphs" stroke="#c7d0d9" stroke-width="0.22">60 µs</text>
<text x="1267.00" y="584.00" font-size="12" fill="#c7d0d9" text-anchor="end" font-weight="normal" textLength="28.26" lengthAdjust="spacingAndGlyphs" stroke="#c7d0d9" stroke-width="0.22">40 µs</text>
<text x="1267.00" y="622.20" font-size="12" fill="#c7d0d9" text-anchor="end" font-weight="normal" textLength="28.26" lengthAdjust="spacingAndGlyphs" stroke="#c7d0d9" stroke-width="0.22">20 µs</text>
<text x="1267.00" y="660.90" font-size="12" fill="#c7d0d9" text-anchor="end" font-weight="normal" textLength="21.66" lengthAdjust="spacingAndGlyphs" stroke="#c7d0d9" stroke-width="0.22">0 ns</text>
<text x="1281.40" y="673.60" font-size="12" fill="#c7d0d9" text-anchor="middle" font-weight="normal" textLength="28.68" lengthAdjust="spacingAndGlyphs" stroke="#c7d0d9" stroke-width="0.22">15:33</text>
<text x="1345.10" y="673.60" font-size="12" fill="#c7d0d9" text-anchor="middle" font-weight="normal" textLength="28.68" lengthAdjust="spacingAndGlyphs" stroke="#c7d0d9" stroke-width="0.22">15:34</text>
<text x="1409.70" y="673.60" font-size="12" fill="#c7d0d9" text-anchor="middle" font-weight="normal" textLength="28.68" lengthAdjust="spacingAndGlyphs" stroke="#c7d0d9" stroke-width="0.22">15:35</text>
<text x="1474.30" y="673.60" font-size="12" fill="#c7d0d9" text-anchor="middle" font-weight="normal" textLength="28.68" lengthAdjust="spacingAndGlyphs" stroke="#c7d0d9" stroke-width="0.22">15:36</text>
<text x="1538.40" y="673.60" font-size="12" fill="#c7d0d9" text-anchor="middle" font-weight="normal" textLength="28.68" lengthAdjust="spacingAndGlyphs" stroke="#c7d0d9" stroke-width="0.22">15:37</text>
<polygon points="1272.90,656.90 1272.90,540.50 1442.00,540.50 1458.60,541.50 1587.00,541.50 1587.00,656.90" fill="#7EB26D" fill-opacity="0.1"/>
<polygon points="1272.90,656.90 1272.90,511.50 1361.70,511.50 1377.90,535.50 1425.90,535.50 1442.00,511.50 1538.50,511.50 1554.20,478.50 1587.00,478.50 1587.00,656.90" fill="#EAB839" fill-opacity="0.1"/>
<polygon points="1272.90,656.90 1272.90,531.50 1281.40,531.50 1297.10,543.90 1361.70,543.90 1378.70,546.40 1425.00,543.90 1458.60,543.90 1474.30,534.10 1522.40,534.10 1538.50,536.20 1587.00,536.20 1587.00,656.90" fill="#6ED0E0" fill-opacity="0.1"/>
<polyline points="1272.90,540.50 1442.00,540.50 1458.60,541.50 1587.00,541.50" fill="none" stroke="#7EB26D" stroke-width="1" stroke-linejoin="round"/><polyline points="1272.90,511.50 1361.70,511.50 1377.90,535.50 1425.90,535.50 1442.00,511.50 1538.50,511.50 1554.20,478.50 1587.00,478.50" fill="none" stroke="#EAB839" stroke-width="1" stroke-linejoin="round"/><polyline points="1272.90,531.50 1281.40,531.50 1297.10,543.90 1361.70,543.90 1378.70,546.40 1425.00,543.90 1458.60,543.90 1474.30,534.10 1522.40,534.10 1538.50,536.20 1587.00,536.20" fill="none" stroke="#6ED0E0" stroke-width="1" stroke-linejoin="round"/>
<rect x="1243.00" y="696.40" width="11" height="2" fill="#7EB26D" fill-opacity="0.8"/>
<text x="1260.70" y="700.00" font-size="12" fill="#c7d0d9" text-anchor="start" font-weight="normal" stroke="#c7d0d9" stroke-width="0.22">localhost:15680</text>
<rect x="1358.50" y="696.40" width="11" height="2" fill="#EAB839" fill-opacity="0.8"/>
<text x="1376.20" y="700.00" font-size="12" fill="#c7d0d9" text-anchor="start" font-weight="normal" stroke="#c7d0d9" stroke-width="0.22">localhost:25680</text>
<rect x="1474.00" y="696.40" width="11" height="2" fill="#6ED0E0" fill-opacity="0.8"/>
<text x="1491.70" y="700.00" font-size="12" fill="#c7d0d9" text-anchor="start" font-weight="normal" stroke="#c7d0d9" stroke-width="0.22">localhost:35680</text>
</svg></body></html>
